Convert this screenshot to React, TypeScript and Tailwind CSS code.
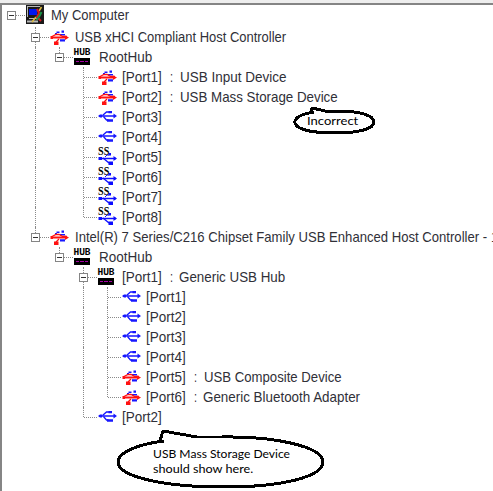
import { useLayoutEffect, useRef, useState } from "react";

type Kind = "pc" | "usb" | "plug" | "ss" | "hub";
type Part = { text: string; width: number; gap?: number };
type Node = { kind: Kind; guides: string; box?: boolean; parts: Part[] };

// Guide codes, one per column: "." blank, "|" line through, "+" branch with more below, "L" last branch
const port = (n: number): Part => ({ text: `[Port${n}]`, width: 40, gap: -1 });
const colon: Part = { text: ":", width: 3, gap: 8 };

const nodes: Node[] = [
  { kind: "pc", guides: "L", box: true, parts: [{ text: "My Computer", width: 78 }] },
  { kind: "usb", guides: ".+", box: true, parts: [{ text: "USB xHCI Compliant Host Controller", width: 211 }] },
  { kind: "hub", guides: ".|L", box: true, parts: [{ text: "RootHub", width: 53 }] },
  { kind: "usb", guides: ".|.+", parts: [port(1), colon, { text: "USB Input Device", width: 106, gap: 7 }] },
  { kind: "usb", guides: ".|.+", parts: [port(2), colon, { text: "USB Mass Storage Device", width: 158, gap: 7 }] },
  { kind: "plug", guides: ".|.+", parts: [port(3)] },
  { kind: "plug", guides: ".|.+", parts: [port(4)] },
  { kind: "ss", guides: ".|.+", parts: [port(5)] },
  { kind: "ss", guides: ".|.+", parts: [port(6)] },
  { kind: "ss", guides: ".|.+", parts: [port(7)] },
  { kind: "ss", guides: ".|.L", parts: [port(8)] },
  {
    kind: "usb", guides: ".L", box: true,
    parts: [
      { text: "Intel(R) 7 Series/C216 Chipset Family USB Enhanced Host Controller -", width: 412 },
      { text: "1", width: 7, gap: 4 },
    ],
  },
  { kind: "hub", guides: "..L", box: true, parts: [{ text: "RootHub", width: 53 }] },
  { kind: "hub", guides: "...+", box: true, parts: [port(1), colon, { text: "Generic USB Hub", width: 106, gap: 6 }] },
  { kind: "plug", guides: "...|+", parts: [port(1)] },
  { kind: "plug", guides: "...|+", parts: [port(2)] },
  { kind: "plug", guides: "...|+", parts: [port(3)] },
  { kind: "plug", guides: "...|+", parts: [port(4)] },
  { kind: "usb", guides: "...|+", parts: [port(5), colon, { text: "USB Composite Device", width: 138, gap: 7 }] },
  { kind: "usb", guides: "...|L", parts: [port(6), colon, { text: "Generic Bluetooth Adapter", width: 157, gap: 6 }] },
  { kind: "plug", guides: "...L", parts: [port(2)] },
];

function Fit({ text, width, gap = 0 }: Part) {
  const ref = useRef<HTMLSpanElement>(null);
  const [scale, setScale] = useState(1);
  useLayoutEffect(() => {
    if (ref.current) setScale(width / ref.current.offsetWidth);
  }, [width]);
  return (
    <span className="block shrink-0" style={{ width, marginLeft: gap }}>
      <span ref={ref} className="inline-block origin-left whitespace-pre" style={{ transform: `scaleX(${scale})` }}>
        {text}
      </span>
    </span>
  );
}

function Icon({ kind }: { kind: Kind }) {
  if (kind === "hub")
    return (
      <span className="flex h-5 w-4 flex-col items-center">
        <span className="h-[10px] font-['DejaVu_Sans_Mono',monospace] text-[9.5px] leading-[10px] font-bold text-black">HUB</span>
        <svg className="mt-px block shrink-0" width="16" height="7" viewBox="0 0 16 7" shapeRendering="crispEdges">
          <path d="M0 0h16v7H0z" />
          <path fill="#a800a8" d="M2 3h3v1H2zM6 3h4v1H6zM11 3h3v1h-3z" />
        </svg>
      </span>
    );
  if (kind === "pc")
    return (
      <svg className="block" width="19" height="20" viewBox="0 0 19 20">
        <path fill="#191919" d="M0 0h18v19H0z" />
        <path fill="#b8b8b8" d="M1 1h13v1H2v10H1zM3 13h9v1H3zM1 15.500h11v2H1z" />
        <path fill="#0018f0" d="M3 4h8v6H3z" />
        <path stroke="#d9b83e" strokeWidth="1.600" d="M15.500 2L13 6M10 12l-4 5" />
        <path stroke="#d51c20" strokeWidth="2" d="M11 4l2 4-2 4 4 4" fill="none" />
        <path stroke="#199447" strokeWidth="2" d="M15.500 7l-2 4-3 4" fill="none" />
      </svg>
    );
  if (kind === "ss")
    return (
      <span className="relative block h-5 w-[19px]">
        <svg className="block" width="19" height="20" viewBox="0 0 19 20" fill="none" stroke="#0d0dff">
          <path d="M1 11.500h17" strokeWidth="1.500" />
          <path d="M5 11l6 5" strokeWidth="1.300" />
          <path d="M7 10l2-2h2" />
          <path fill="#0d0dff" stroke="none" d="M0.500 10h3.500v3H0.500zM15.500 9l3.500 2.500-3.500 2.500zM10.500 14.500h4.500v3.500h-4.500zM10.500 6H13v2.500h-2.500z" />
        </svg>
        <span className="absolute -top-px left-0 block h-[11px] w-[11px] font-['Liberation_Serif',serif] text-[12px] leading-[11px] font-bold text-black">
          <Fit text="SS" width={11} />
        </span>
      </span>
    );
  if (kind === "plug")
    return (
      <svg className="block" width="19" height="20" viewBox="0 0 19 20" fill="none" stroke="#1717ff">
        <path d="M1 9h16" strokeWidth="1.500" />
        <path d="M4.500 8.500l4-3.500h3M5.500 9.500l3 3.500h2" strokeWidth="1.300" />
        <path fill="#1717ff" stroke="none" d="M0 9l2-1.500h2v3H2L0 9zM15.500 6.500L19 9l-3.500 2.500zM10.500 4H14v2.200h-3.500zM9 12.300H15v2.400H9z" />
      </svg>
    );
  return (
    <svg className="block" width="19" height="20" viewBox="0 0 19 20" fill="none">
      <path fill="#1717ff" d="M6.500 4.500h3V6h-3zM5 6h2v1.500H5zM11.500 3.500H14v2.300h-2.500zM10 7h5v1.500h-5zM10 12.200h5v2.300h-5z" />
      <path stroke="#f11" strokeWidth="2" d="M1 10.500h16" />
      <path stroke="#f11" strokeWidth="1.300" d="M2 9.500l4-2h3l4 2h4M9 12l-3 3" />
      <path fill="#f11" d="M4 14.500h4.500v3.500H4zM15 8.500l4 2-4 2.500zM0.500 9H3v3H0.500z" />
    </svg>
  );
}

function Guide({ code, top, box }: { code: string; top: boolean; box: boolean }) {
  const line = "block w-0 border-l border-dotted border-[#8a8a8a]";
  return (
    <span className="relative block h-5 w-6 shrink-0">
      {code !== "." && !top && <span className={`${line} ${code === "L" ? "h-[10px]" : "h-5"}`} />}
      {(code === "+" || code === "L") && (
        <span className="absolute top-[10px] left-px block w-[13px] border-t border-dotted border-[#8a8a8a]" />
      )}
      {box && (
        <span className="absolute top-[6px] -left-1 flex h-[9px] w-[9px] items-center justify-center border border-[#858585] bg-white">
          <i className="h-px w-[5px] bg-[#333]" />
        </span>
      )}
    </span>
  );
}

function Row({ node, first }: { node: Node; first: boolean }) {
  const last = node.guides.length - 1;
  return (
    <div className={`flex shrink-0 ${first ? "h-[22px]" : "h-5"}`}>
      {node.guides.split("").map((c, i) => (
        <Guide key={i} code={c} top={first} box={i === last && !!node.box} />
      ))}
      <span className="-ml-[9px] flex w-[25px] shrink-0">
        <Icon kind={node.kind} />
      </span>
      <span className="flex h-5 text-[14.5px] leading-5">
        {node.parts.map((p, i) => (
          <Fit key={i} {...p} />
        ))}
      </span>
    </div>
  );
}

export default function App() {
  return (
    <div className="relative h-[491px] w-[493px] overflow-hidden bg-[#eeeeee] pt-[3px] font-['Liberation_Sans',Arial,sans-serif] text-[#303038]">
      <div className="flex h-[488px] flex-col border-t-2 border-l-2 border-[#858585] bg-white pl-[9px]">
        {nodes.map((n, i) => (
          <Row key={i} node={n} first={i === 0} />
        ))}
      </div>
      <svg className="absolute top-0 left-0" width="493" height="491" fill="none" stroke="#000" strokeWidth="3" strokeLinejoin="round" shapeRendering="crispEdges">
        <path d="M314 112C301 114 294 118 295 123C297 130 314 133 335 133C358 133 374 129 374 122C374 115 358 111 338 111L325 111L312 108L311 113" />
        <path d="M164 441C139 444 118 452 118 462C118 477 165 487 224 487C281 487 323 477 323 462C323 447 276 436 222 437L197 437L163 431L160 441L164 441" />
      </svg>
      <div className="absolute top-[113px] left-[307px] font-['Lato',sans-serif] text-[12px] leading-4 text-black">
        <Fit text="Incorrect" width={51} />
      </div>
      <div className="absolute top-[446px] left-[153px] font-['Lato',sans-serif] text-[12px] leading-[15px] text-black">
        <Fit text="USB Mass Storage Device" width={137} />
        <Fit text="should show here." width={100} />
      </div>
    </div>
  );
}
